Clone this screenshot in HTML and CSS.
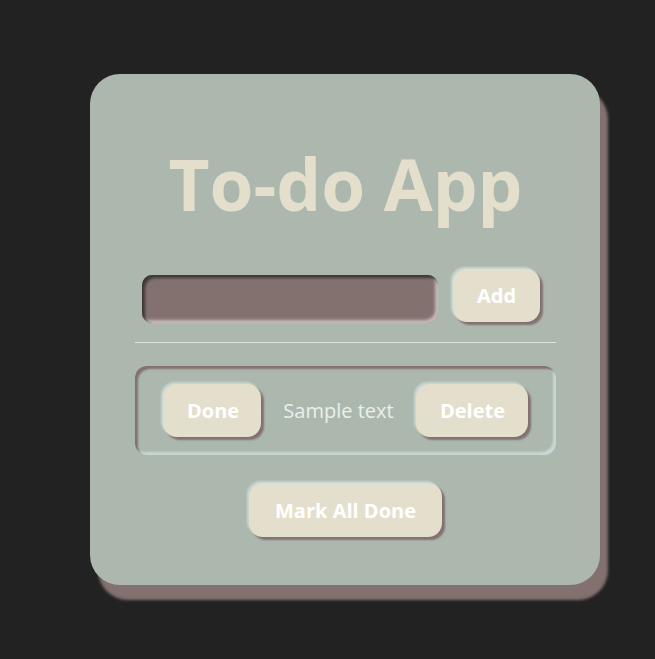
FILE: index.html
```html
<!DOCTYPE html>
<html lang="en">
<head>
<meta charset="utf-8">
<title>To-do App</title>
<link rel="stylesheet" href="styles.css">
</head>
<body>
<main class="card">
  <h1 class="title">To-do App</h1>
  <div class="entry-row">
    <input class="entry" type="text">
    <button class="btn">Add</button>
  </div>
  <hr class="divider">
  <ul class="list">
    <li class="item">
      <button class="btn">Done</button>
      <span class="item-text">Sample text</span>
      <button class="btn">Delete</button>
    </li>
  </ul>
  <div class="footer">
    <button class="btn">Mark All Done</button>
  </div>
</main>
</body>
</html>
```
FILE: styles.css
```css
html, body {
  margin: 0;
  padding: 0;
  background: #222222;
}
body {
  width: 655px;
  height: 659px;
  overflow: hidden;
  font-family: "Open Sans", "Noto Sans", sans-serif;
}
.card {
  box-sizing: border-box;
  width: 510px;
  height: 511px;
  margin: 74px 0 0 90px;
  padding: 60px 44px 0 45px;
  background: #acb8ae;
  border-radius: 30px;
  box-shadow: 8px 15px 3px #837170;
  display: flex;
  flex-direction: column;
}
.title {
  margin: 0;
  text-align: center;
  font-size: 71px;
  line-height: 100px;
  font-weight: 700;
  color: #e3dfcc;
}
.entry-row {
  display: flex;
  align-items: flex-start;
  gap: 15px;
  margin: 35px 0 0 7px;
  height: 54px;
}
.entry {
  box-sizing: border-box;
  width: 296px;
  height: 48px;
  margin-top: 6px;
  border: none;
  border-radius: 10px;
  background: #837170;
  box-shadow: inset 3px 3px 3px #3e3636, inset -3px -3px 3px #c5b9b6;
  outline: none;
}
.btn {
  box-sizing: border-box;
  height: 53px;
  padding: 0 24px;
  border: none;
  border-radius: 14px;
  background: #e4dfcd;
  color: #ffffff;
  font-family: inherit;
  font-size: 20px;
  font-weight: 700;
  box-shadow: 3px 3px 2px #837170, -2px -2px 2px #c9d6d2;
}
.divider {
  margin: 19px 0 0 0;
  height: 1px;
  border: none;
  background: #dde3dd;
}
.list {
  list-style: none;
  margin: 23px 0 0 0;
  padding: 0;
}
.item {
  box-sizing: border-box;
  height: 89px;
  display: flex;
  align-items: center;
  justify-content: space-between;
  padding: 0 28px;
  border-radius: 12px;
  box-shadow: inset 3px 3px 2px #837170, inset -3px -3px 2px #c9d6d2;
}
.item .btn:first-child {
  width: 98px;
}
.item .btn:last-child {
  width: 112px;
}
.item-text {
  font-size: 20px;
  color: #eaf0eb;
}
.footer {
  display: flex;
  justify-content: center;
  margin-top: 28px;
}
.footer .btn {
  width: 193px;
  height: 54px;
  padding: 0;
}
```
